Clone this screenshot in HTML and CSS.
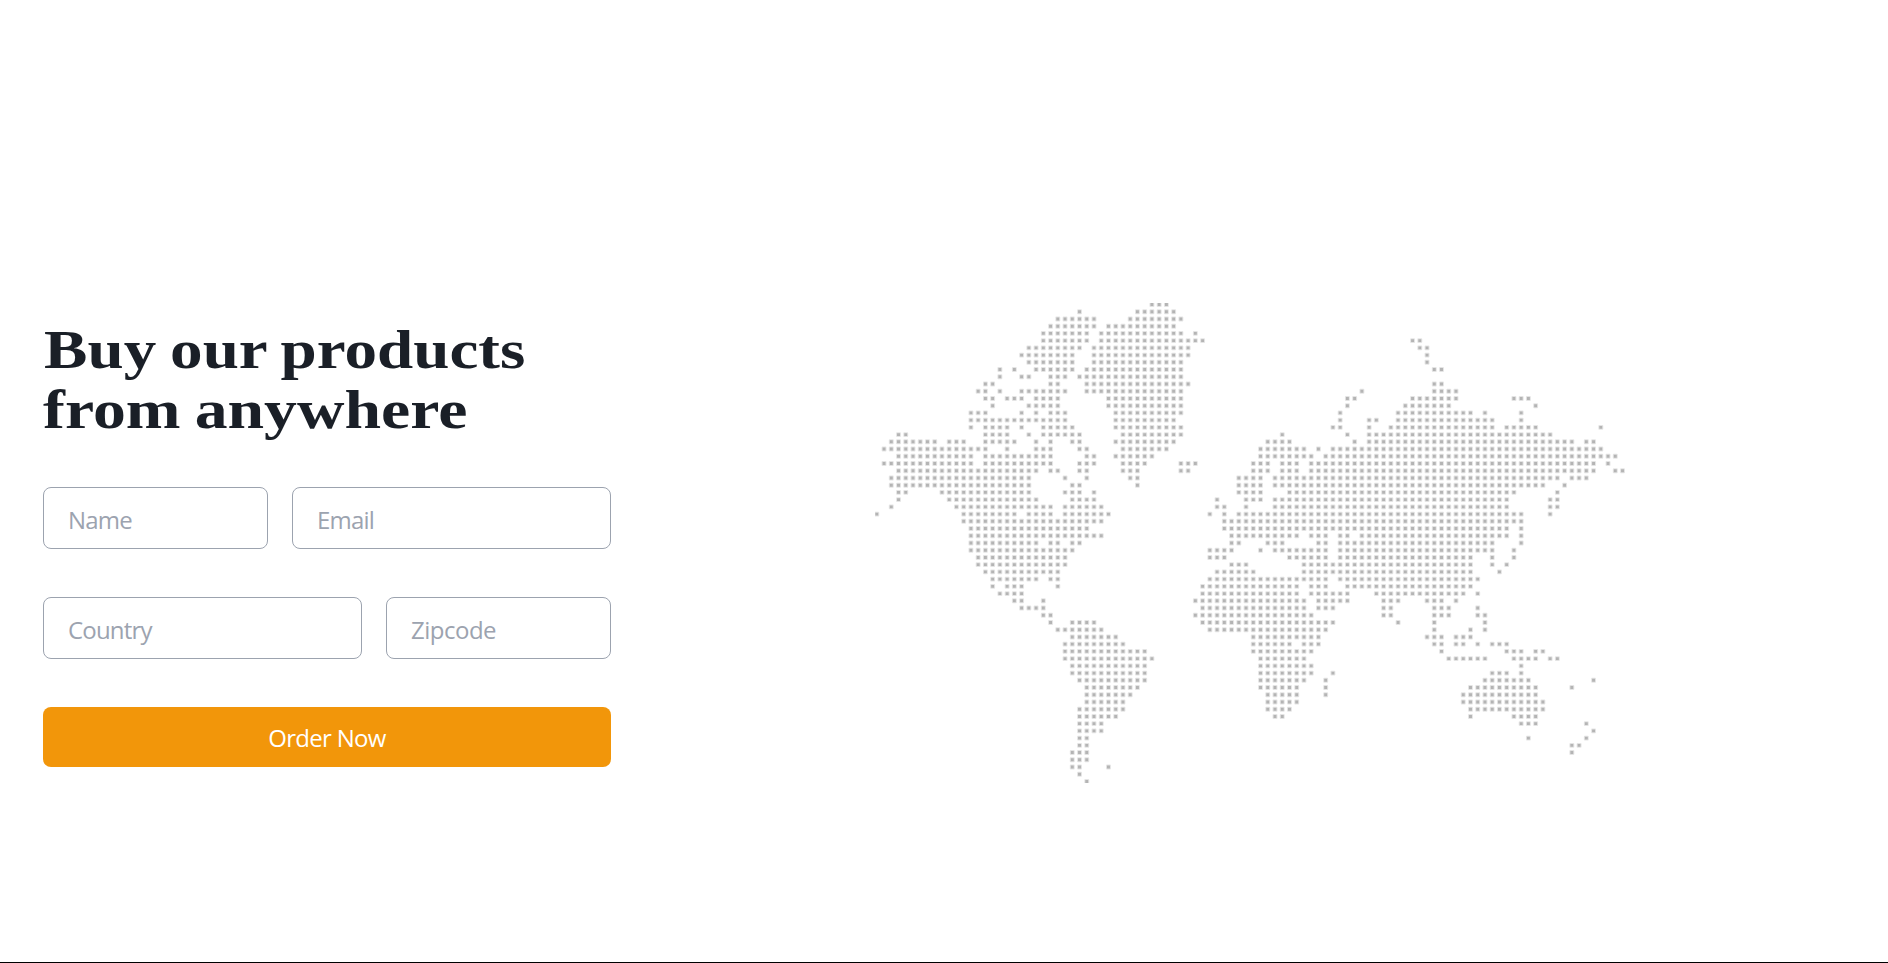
FILE: index.html
```html
<!DOCTYPE html>
<html lang="en">
<head>
<meta charset="utf-8">
<title>Buy our products from anywhere</title>
<link rel="stylesheet" href="styles.css">
</head>
<body>
<main class="hero">
  <section class="order">
    <h1 class="title"><span class="line">Buy our products</span> <span class="line">from anywhere</span></h1>
    <form class="form">
      <div class="row row-short-first">
        <input class="field name" type="text" placeholder="Name">
        <input class="field email" type="text" placeholder="Email">
      </div>
      <div class="row row-long-first">
        <input class="field country" type="text" placeholder="Country">
        <input class="field zipcode" type="text" placeholder="Zipcode">
      </div>
      <button class="submit" type="button">Order Now</button>
    </form>
  </section>
  <svg class="map" viewBox="0 0 750 480" role="img" aria-label="World map">
    <path class="dots" id="dots"></path>
  </svg>
</main>
<script src="map.js"></script>
</body>
</html>
```

FILE: styles.css
```css
* { box-sizing: border-box; }

body {
  margin: 0;
  background: #fff;
  font-family: "Open Sans", "Noto Sans", sans-serif;
}

.hero {
  display: flex;
  align-items: center;
  gap: 264px;
  height: 963px;
  padding: 124px 43px 0;
  border-bottom: 1px solid #000;
}

.order { width: 568px; flex: none; }

.title {
  margin: 0 0 48px;
  color: #1a1f27;
  font-family: Georgia, "Liberation Serif", serif;
  font-size: 55.5px;
  font-weight: 700;
  line-height: 60px;
}

.line {
  display: block;
  width: max-content;
  white-space: nowrap;
  word-spacing: -2px;
  transform: translate(1px, 1px) scaleX(1.173);
  transform-origin: 0 50%;
}
.line + .line { transform: translate(0, 1px) scaleX(1.185); }

.form { display: grid; gap: 48px; }
.row { display: grid; gap: 24px; }
.row-short-first { grid-template-columns: 225px 319px; }
.row-long-first { grid-template-columns: 319px 225px; }

.field {
  width: 100%;
  height: 62px;
  padding: 2px 24px 0;
  border: 1px solid #9ca3af;
  border-radius: 8px;
  background: #fff;
  font: 24px "Open Sans", "Noto Sans", sans-serif;
  letter-spacing: -0.8px;
}
.field::placeholder { color: #9ca3af; opacity: 1; }
.zipcode { letter-spacing: -0.5px; }

.submit {
  height: 60px;
  padding: 1px 0 0;
  border: 0;
  border-radius: 8px;
  background: #f2960a;
  color: #fff;
  font: 24px "Open Sans", "Noto Sans", sans-serif;
  letter-spacing: -0.7px;
}

.map { width: 750px; height: 480px; flex: none; overflow: hidden; }
.dots {
  fill: #b6b6b6;
  stroke: #b0b0b0;
  stroke-opacity: 0.34;
  stroke-width: 2px;
  stroke-linejoin: round;
}
```

FILE: map.js
```js
// Each entry is one row of the map; values are column runs ("from-to" or a single column).
const rows = [
  "38-40",
  "28 36-41",
  "25-30 35-42",
  "24-30 32-41",
  "23-29 31-42 44",
  "23-29 31-45 74 75",
  "21-28 30-43 75 76",
  "20-27 30-43 76",
  "21-27 30-42 76",
  "17 19 22-27 29-42 77 78",
  "17 20 21 24-26 28-42",
  "15 16 24 25 29-43 77 78",
  "14 15 17 20-26 29-42 67 77-80",
  "15 16 18-20 22-25 32-42 65 66 74-80 88-90",
  "16 21-25 32-42 65 73-79 91",
  "13-15 20 22 24-26 33-42 64 72-82 84 89",
  "13-26 33-41 64 68 69 72-85 89",
  "13 15-18 20 23-27 33-42 63 64 68 71-85 87-91 100",
  "3 4 15-18 21 23-28 34-42 56 65 68-93",
  "2-8 10-12 15-19 22 24 27 28 33-41 54-57 66 68-96 98 99",
  "1-15 18 22-24 28 29 34-40 53-59 61 63-100",
  "3-13 15-24 29 30 33-38 53-60 62-102",
  "1-13 15-24 28-30 34-37 42-44 52-54 56-58 60-99 101",
  "3-22 24 25 28 29 34-36 42 43 52-54 56-58 60-99 102 103",
  "2-21 26 29 35 36 50-53 55-94 96-98",
  "2-21 27 28 36 50-53 55-92 95",
  "3 4 9-21 26-28 30 50-53 57-88 94",
  "3 10-22 27-30 47 51-53 55-87 93 94",
  "2 11-24 26-31 47 48 51 55-87 93 94",
  "0 12-19 21-24 26-32 46 48 50-89 93",
  "12-31 48-89",
  "13-29 48-87 89",
  "13-31 49-58 60-62 64 65 67-87 89",
  "13-22 24 25 27 28 49 50 54-56 61 62 64-85 89",
  "13-27 46-49 53 55-62 64-85 88",
  "14-26 46-48 57-62 64-82 85 88",
  "14-26 49-51 59-82 85 87",
  "15-25 47-52 59-82 86",
  "16-22 24 25 46-62 64-83",
  "16 18-20 25 45-58 60-62 65-82",
  "17-20 45-58 60-65 69-81 83",
  "19 20 23 44-59 61-65 70-72 76-78 80",
  "20-23 45-59 61-63 70 71 77-79 83",
  "23 24 44-60 70 71 77-79 83 84",
  "24 27-30 45-63 72 77 84",
  "25-31 46-62 77 82 84",
  "27-33 52-61 76-78 80-82",
  "26-34 52-57 59-61 77 78 80 81 83 85-87",
  "26-37 52-60 78 87-89 91 92",
  "26-38 53-59 79-84 88-91 93 94",
  "27-37 53-60 89",
  "27-37 53-60 63 85-87 89",
  "28-37 53-59 62 84-90 99",
  "29-36 53-58 62 82-91 96",
  "29-35 54-58 62 81-91",
  "29-34 54-58 81-92",
  "28-34 54-57 82-92",
  "28-33 55 56 82 88-91",
  "28-31 89-91 98",
  "28-31 99",
  "28 29 90 98",
  "28 29 96 97",
  "27-29 96",
  "27-29",
  "27 28 32",
  "28",
  "29"
];

const stepX = 7.24, stepY = 7.227, size = 2.9;
let d = "";
rows.forEach((row, r) => {
  row.split(" ").forEach(run => {
    const [from, to = from] = run.split("-").map(Number);
    for (let c = from; c <= to; c++) {
      const x = (1.8 + c * stepX - size / 2).toFixed(2);
      const y = (1.5 + r * stepY - size / 2).toFixed(2);
      d += `M${x} ${y}h${size}v${size}h-${size}z`;
    }
  });
});
document.getElementById("dots").setAttribute("d", d);
```
